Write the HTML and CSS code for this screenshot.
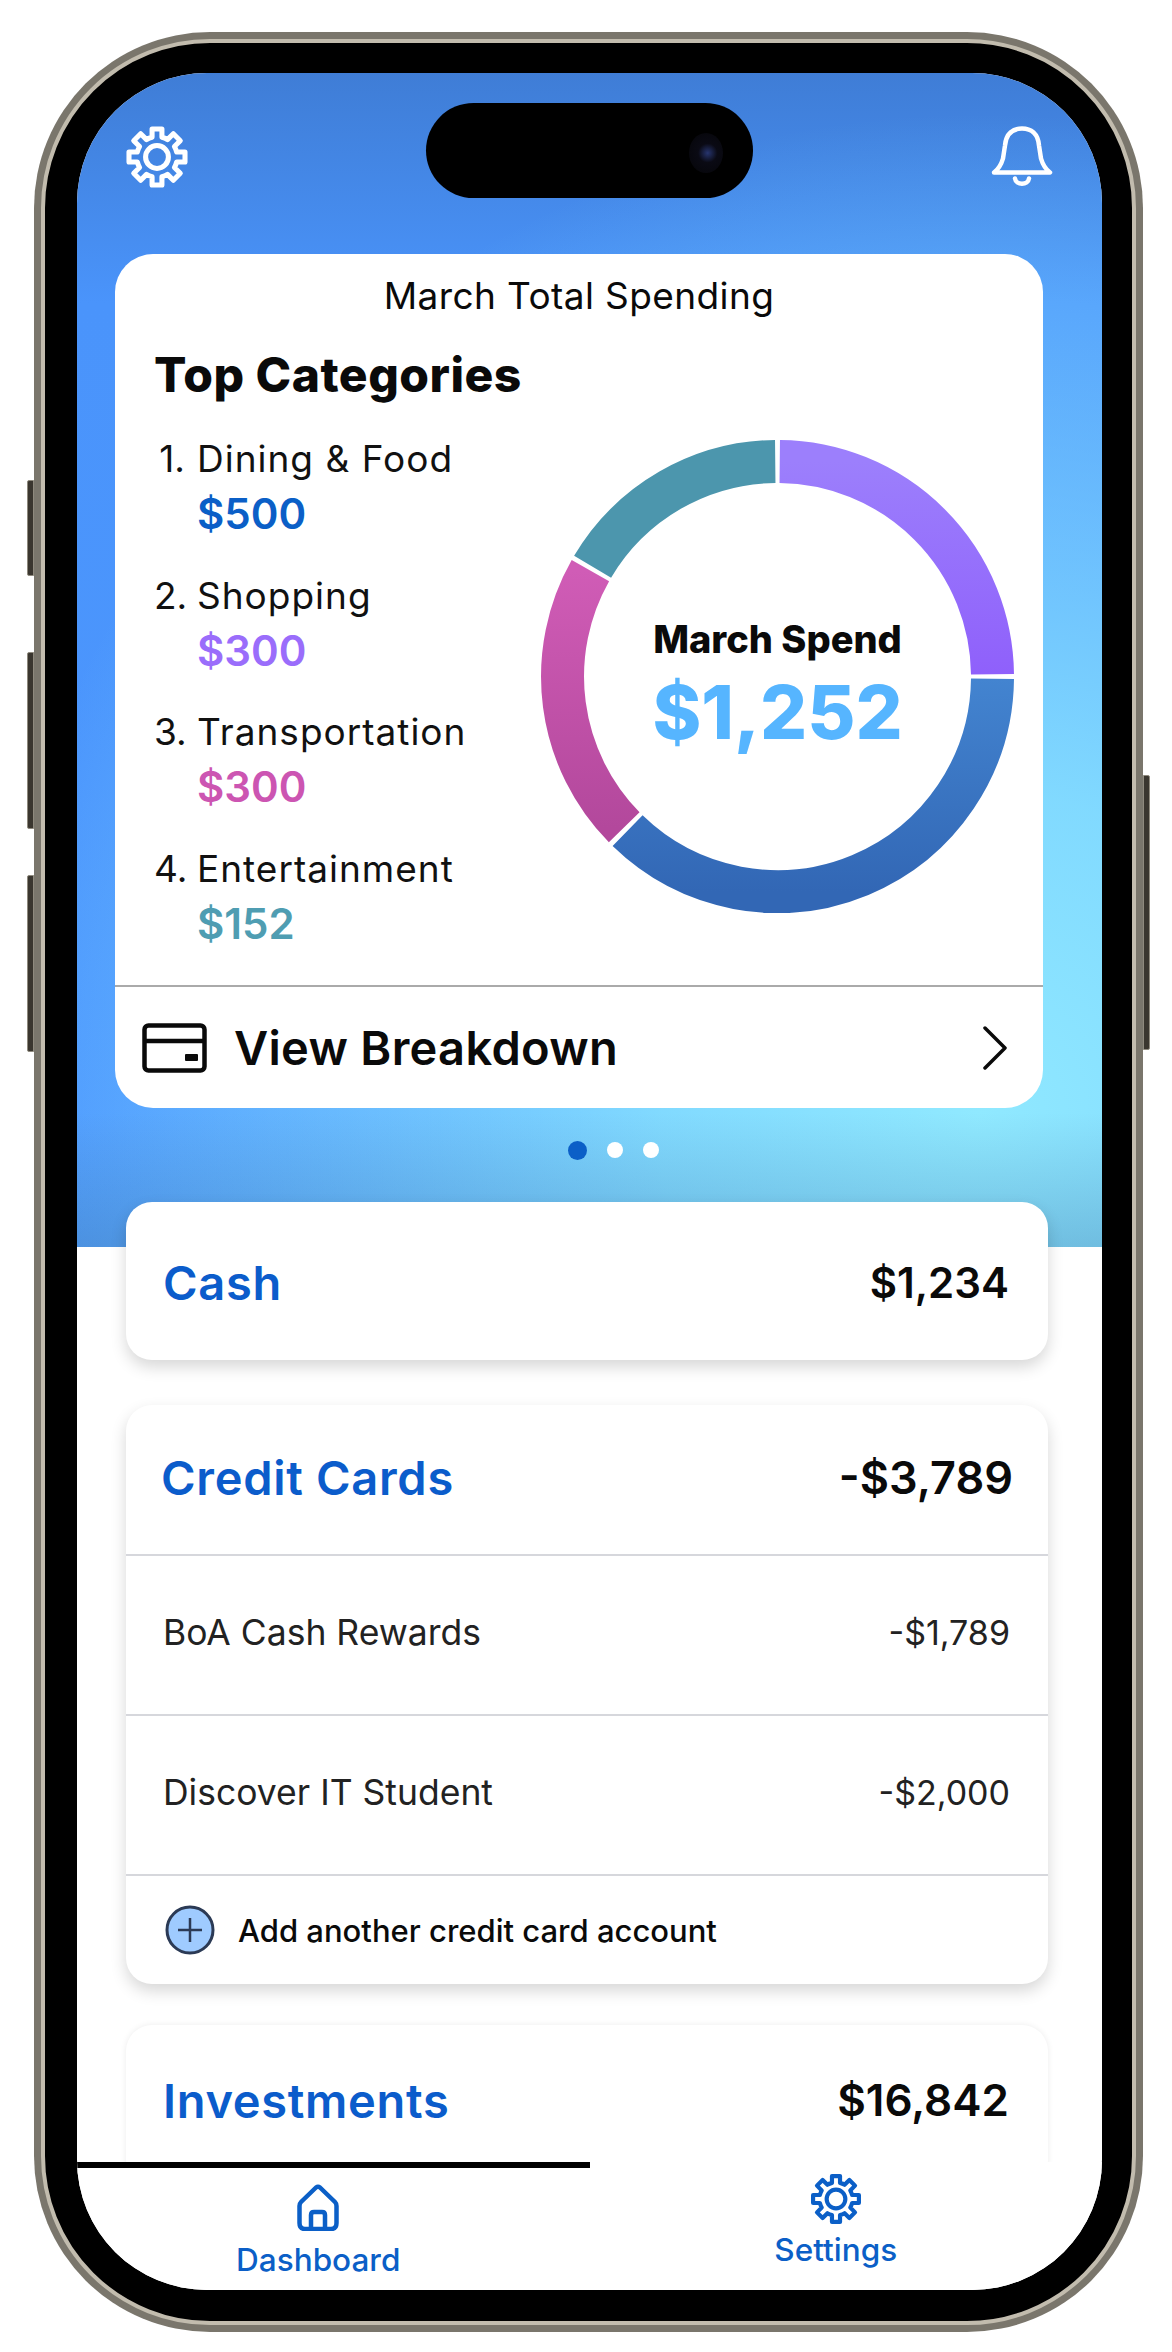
FILE: index.html
```html
<!DOCTYPE html>
<html lang="en">
  <head>
    <meta charset="UTF-8" />
    <meta name="viewport" content="width=device-width, initial-scale=1.0" />
    <title>Dashboard</title>
    <link rel="stylesheet" href="styles.css">
  </head>
  <body>
    <svg class="defs" width="0" height="0">
      <symbol id="gear" viewBox="-13 -13 26 26">
        <path d="M-1.94-7.76 L-1.94-11.03 L1.94-11.03 L1.94-7.76 A8 8 0 0 1 4.12-6.86 L6.43-9.17 L9.17-6.43 L6.86-4.12 A8 8 0 0 1 7.76-1.94 L11.03-1.94 L11.03 1.94 L7.76 1.94 A8 8 0 0 1 6.86 4.12 L9.17 6.43 L6.43 9.17 L4.12 6.86 A8 8 0 0 1 1.94 7.76 L1.94 11.03 L-1.94 11.03 L-1.94 7.76 A8 8 0 0 1 -4.12 6.86 L-6.43 9.17 L-9.17 6.43 L-6.86 4.12 A8 8 0 0 1 -7.76 1.94 L-11.03 1.94 L-11.03-1.94 L-7.76-1.94 A8 8 0 0 1 -6.86-4.12 L-9.17-6.43 L-6.43-9.17 L-4.12-6.86 A8 8 0 0 1 -1.94-7.76 Z" fill="none" stroke="currentColor" stroke-width="2" stroke-linejoin="round" />
        <circle r="4.5" fill="none" stroke="currentColor" stroke-width="2" />
      </symbol>
      <linearGradient id="gradPurple" x1="0" y1="0" x2="0" y2="1">
        <stop offset="0" stop-color="#9c7ffc" />
        <stop offset="1" stop-color="#8f60fb" />
      </linearGradient>
      <linearGradient id="gradBlue" x1="0" y1="0" x2="0" y2="1">
        <stop offset="0" stop-color="#4384d0" />
        <stop offset="1" stop-color="#3267b5" />
      </linearGradient>
      <linearGradient id="gradPink" x1="0" y1="0" x2="0" y2="1">
        <stop offset="0" stop-color="#d05cb6" />
        <stop offset="1" stop-color="#b3489c" />
      </linearGradient>
    </svg>

    <div class="phone">
      <span class="side-btn btn-mute"></span>
      <span class="side-btn btn-up"></span>
      <span class="side-btn btn-down"></span>
      <span class="side-btn btn-power"></span>
      <div class="rim">
        <div class="screen">
          <div class="island"><span class="lens"></span></div>

          <div class="scroll">
            <section class="hero">
              <div class="topbar">
                <svg class="top-gear" viewBox="-13 -13 26 26"><use href="#gear" x="-13" y="-13" width="26" height="26" /></svg>
                <svg class="top-bell" viewBox="0 0 64 62" fill="none" stroke="currentColor" stroke-width="4.5" stroke-linejoin="round" stroke-linecap="round">
                  <path d="M4 47 C8 44 11 40 13 33 L15 20 C16 8 23 3 32 3 C41 3 48 8 49 20 L51 33 C53 40 56 44 60 47 Z" />
                  <path d="M25 53 C26 60 38 60 39 53" />
                </svg>
              </div>

              <div class="spend-card">
                <div class="spend-title">March Total Spending</div>
                <h2 class="spend-heading">Top Categories</h2>
                <div class="spend-body">
                  <ol class="cats">
                    <li class="cat">
                      <div class="cat-name"><span class="cat-num">1.</span>Dining &amp; Food</div>
                      <div class="cat-amt amt-blue">$500</div>
                    </li>
                    <li class="cat">
                      <div class="cat-name"><span class="cat-num">2.</span>Shopping</div>
                      <div class="cat-amt amt-purple">$300</div>
                    </li>
                    <li class="cat">
                      <div class="cat-name"><span class="cat-num">3.</span>Transportation</div>
                      <div class="cat-amt amt-pink">$300</div>
                    </li>
                    <li class="cat">
                      <div class="cat-name"><span class="cat-num">4.</span>Entertainment</div>
                      <div class="cat-amt amt-teal">$152</div>
                    </li>
                  </ol>
                  <div class="donut">
                    <svg class="donut-ring" viewBox="0 0 473 473" fill="none" stroke-width="43">
                      <path d="M238.75 21.5 A215 215 0 0 1 451.5 234.25" stroke="url(#gradPurple)" />
                      <path d="M451.5 238.75 A215 215 0 0 1 86.6 390.7" stroke="url(#gradBlue)" />
                      <path d="M83.2 387.3 A215 215 0 0 1 49.4 130.7" stroke="url(#gradPink)" />
                      <path d="M51.6 126.8 A215 215 0 0 1 234.25 21.5" stroke="#4c96ad" />
                    </svg>
                    <div class="donut-label">
                      <div class="donut-caption">March Spend</div>
                      <div class="donut-total">$1,252</div>
                    </div>
                  </div>
                </div>
                <div class="breakdown">
                  <svg class="breakdown-icon" viewBox="0 0 65 50" fill="none" stroke="#0a0a0a">
                    <rect x="2.5" y="2.5" width="60" height="45" rx="4" stroke-width="4.5" />
                    <path d="M2.5 18 H62.5" stroke-width="4.5" />
                    <rect x="43" y="31" width="13" height="7" rx="1" fill="#0a0a0a" stroke="none" />
                  </svg>
                  <span class="breakdown-text">View Breakdown</span>
                  <svg class="chevron" viewBox="0 0 24 44" fill="none" stroke="#0a0a0a" stroke-width="3.5" stroke-linecap="round" stroke-linejoin="round">
                    <path d="M2 2 L22 22 L2 42" />
                  </svg>
                </div>
              </div>

              <div class="dots">
                <span class="dot dot-active"></span>
                <span class="dot"></span>
                <span class="dot"></span>
              </div>
            </section>

            <div class="accounts">
              <div class="acct">
                <div class="acct-head acct-cash">
                  <span class="acct-name">Cash</span>
                  <span class="acct-total">$1,234</span>
                </div>
              </div>

              <div class="acct">
                <div class="acct-head acct-credit">
                  <span class="acct-name">Credit Cards</span>
                  <span class="acct-total total-large">-$3,789</span>
                </div>
                <div class="acct-row">
                  <span class="row-name">BoA Cash Rewards</span>
                  <span>-$1,789</span>
                </div>
                <div class="acct-row">
                  <span class="row-name">Discover IT Student</span>
                  <span>-$2,000</span>
                </div>
                <div class="acct-add">
                  <svg class="add-icon" viewBox="0 0 50 50">
                    <circle cx="25" cy="25" r="23" fill="#9fcbff" stroke="#2b3a55" stroke-width="3" />
                    <path d="M25 13 V37 M13 25 H37" stroke="#2b3a55" stroke-width="2.5" />
                  </svg>
                  <span>Add another credit card account</span>
                </div>
              </div>

              <div class="acct acct-last">
                <div class="acct-head acct-invest">
                  <span class="acct-name">Investments</span>
                  <span class="acct-total total-mid">$16,842</span>
                </div>
              </div>
            </div>
          </div>

          <nav class="tabs">
            <div class="tab tab-active">
              <svg class="tab-home" viewBox="0 0 42 47" fill="none" stroke="currentColor" stroke-width="4.5" stroke-linejoin="round">
                <path d="M19 3.5 L4 18 Q2.5 19.5 2.5 22 V39 Q2.5 45 8 45 H34 Q39.5 45 39.5 39 V22 Q39.5 19.5 38 18 L23 3.5 Q21 2 19 3.5 Z" />
                <path d="M14 45 V31 Q14 28 17 28 H25 Q28 28 28 31 V45" />
              </svg>
              <span class="tab-label label-home">Dashboard</span>
            </div>
            <div class="tab tab-settings">
              <svg class="tab-gear" viewBox="-13 -13 26 26"><use href="#gear" x="-13" y="-13" width="26" height="26" /></svg>
              <span class="tab-label label-settings">Settings</span>
            </div>
          </nav>
        </div>
      </div>
    </div>
  </body>
</html>
```

FILE: styles.css
```css
* {
  box-sizing: border-box;
}
body {
  margin: 0;
  height: 2352px;
  background: #fff;
  font-family: Inter, "Liberation Sans", sans-serif;
  color: #0a0a0a;
  overflow: hidden;
}
.defs {
  display: block;
  height: 0;
}

/* device frame */
.phone {
  position: relative;
  width: 1109px;
  height: 2300px;
  margin: 32px 0 0 34px;
  padding: 7px;
  border-radius: 176px;
  background: #7a766c;
}
.rim {
  height: 100%;
  padding: 30px 30px 31px 32px;
  border-radius: 169px;
  border: 4px solid #c2bcae;
  background: #000;
}
.side-btn {
  position: absolute;
  width: 7px;
  background: #3a362f;
  border: 1px solid #8f8a7e;
  border-radius: 2px 0 0 2px;
}
.btn-mute {
  left: -7px;
  top: 448px;
  height: 96px;
}
.btn-up {
  left: -7px;
  top: 620px;
  height: 177px;
}
.btn-down {
  left: -7px;
  top: 843px;
  height: 177px;
}
.btn-power {
  right: -7px;
  top: 743px;
  height: 275px;
  border-radius: 0 2px 2px 0;
}
.screen {
  position: relative;
  height: 100%;
  display: flex;
  flex-direction: column;
  border-radius: 130px;
  background: #fff;
  overflow: hidden;
}
.island {
  position: absolute;
  left: 349px;
  top: 30px;
  width: 327px;
  height: 95px;
  border-radius: 48px;
  background: #000;
}
.lens {
  position: absolute;
  right: 30px;
  top: 30px;
  width: 34px;
  height: 40px;
  border-radius: 50%;
  background: radial-gradient(circle at 55% 50%, #27356f 0, #0a0a14 35%, #050508 100%);
}

/* blue header */
.scroll {
  flex: 1;
  min-height: 0;
  overflow: hidden;
}
.hero {
  height: 1174px;
  padding: 52px 59px 0 38px;
  background:
    linear-gradient(180deg, rgba(60, 115, 160, 0) 1040px, rgba(60, 115, 160, 0.32) 1174px),
    radial-gradient(ellipse 1000px 1000px at 88% 1040px, #90e9ff 0, rgba(135, 225, 255, 0.9) 32%, rgba(90, 165, 255, 0) 100%),
    linear-gradient(180deg, #3f7dd6 0, #4a94fb 230px, #4c97ff 100%);
}
.topbar {
  display: flex;
  justify-content: space-between;
  margin: 0 -11px 0 11px;
  height: 63px;
  color: #fff;
}
.top-gear {
  width: 66px;
  height: 66px;
  margin: -1px 0 0 -2px;
}
.top-bell {
  width: 64px;
  height: 63px;
}
.spend-card {
  height: 854px;
  margin-top: 66px;
  border-radius: 38px;
  background: #fff;
  overflow: hidden;
}
.spend-title {
  margin-top: 20px;
  font-size: 37px;
  line-height: 44px;
  letter-spacing: 0.4px;
  text-align: center;
}
.spend-heading {
  margin: 29px 0 0 39px;
  font-size: 48px;
  line-height: 56px;
  letter-spacing: 0.5px;
  font-weight: 800;
}
.spend-body {
  display: flex;
  justify-content: space-between;
  height: 545px;
  margin-top: 37px;
  padding: 0 29px 0 39px;
}
.cats {
  margin: -4px 0 0;
  padding: 0;
  list-style: none;
}
.cat {
  height: 136.5px;
}
.cat-name {
  position: relative;
  padding-left: 43px;
  font-size: 37px;
  line-height: 46px;
  letter-spacing: 1px;
  white-space: nowrap;
  color: #111;
}
.cat-num {
  position: absolute;
  left: 0;
  width: 31px;
  letter-spacing: 0;
  text-align: right;
}
.cat-amt {
  margin: 9px 0 0 43px;
  font-size: 42px;
  line-height: 46px;
  font-weight: 600;
}
.amt-blue {
  color: #0b5fc7;
}
.amt-purple {
  color: #9a6dfb;
}
.amt-pink {
  color: #cc55b2;
}
.amt-teal {
  color: #4f9db2;
}
.donut {
  display: grid;
  width: 473px;
  height: 473px;
}
.donut-ring,
.donut-label {
  grid-area: 1 / 1;
}
.donut-ring {
  width: 473px;
  height: 473px;
}
.donut-label {
  display: flex;
  flex-direction: column;
  align-items: center;
  justify-content: center;
  padding-top: 20px;
}
.donut-caption {
  font-size: 38px;
  line-height: 44px;
  font-weight: 800;
}
.donut-total {
  margin-top: 7px;
  font-size: 74px;
  line-height: 88px;
  font-weight: 800;
  color: #56b5ff;
}
.breakdown {
  display: flex;
  align-items: center;
  height: 123px;
  padding: 0 36px 0 27px;
  border-top: 2px solid #aaa;
}
.breakdown-icon {
  width: 65px;
  height: 50px;
  margin-right: 27px;
}
.breakdown-text {
  flex: 1;
  font-size: 47px;
  letter-spacing: 0.3px;
  font-weight: 600;
}
.chevron {
  width: 24px;
  height: 44px;
}
.dots {
  display: flex;
  justify-content: center;
  align-items: center;
  gap: 20px;
  height: 18px;
  margin-top: 33px;
  padding-left: 68px;
}
.dot {
  width: 16px;
  height: 16px;
  border-radius: 50%;
  background: #fff;
}
.dot-active {
  width: 19px;
  height: 19px;
  background: #0b5fc7;
}

/* account cards */
.accounts {
  position: relative;
  display: flex;
  flex-direction: column;
  gap: 45px;
  margin-top: -45px;
  padding: 0 54px 0 49px;
}
.acct {
  border-radius: 26px;
  background: #fff;
  box-shadow: 0 7px 16px rgba(0, 0, 0, 0.16);
}
.acct-last {
  margin-top: -4px;
  height: 160px;
  box-shadow: 0 0 6px rgba(0, 0, 0, 0.08);
}
.acct-head {
  display: flex;
  justify-content: space-between;
  align-items: center;
  padding: 0 39px 0 37px;
}
.acct-cash {
  height: 158px;
  padding-top: 2px;
}
.acct-credit {
  height: 149px;
  padding: 0 35px 4px;
}
.acct-invest {
  height: 150px;
  margin-top: 0;
}
.acct-name {
  font-size: 47px;
  letter-spacing: 0.7px;
  font-weight: 600;
  color: #0b5ccb;
}
.acct-total {
  font-size: 42px;
  font-weight: 600;
}
.total-large {
  font-size: 45px;
}
.total-mid {
  font-size: 44px;
}
.acct-row {
  display: flex;
  justify-content: space-between;
  align-items: center;
  height: 160px;
  padding: 0 38px 6px 37px;
  border-top: 2px solid #d6d7dc;
  font-size: 34px;
  color: #222;
}
.row-name {
  font-size: 35.5px;
}
.acct-add {
  display: flex;
  align-items: center;
  gap: 23px;
  height: 110px;
  padding-left: 39px;
  border-top: 2px solid #d6d7dc;
  font-size: 31px;
  font-weight: 500;
}
.add-icon {
  width: 50px;
  height: 50px;
}

/* bottom tabs */
.tabs {
  display: flex;
  height: 128px;
  background: #fff;
  position: relative;
  color: #0b5fc7;
}
.tab {
  width: 50%;
  display: flex;
  flex-direction: column;
  align-items: center;
}
.tab-active {
  padding: 16px 30px 0 0;
  border-top: 6px solid #000;
}
.tab-settings {
  padding: 10px 20px 0 0;
}
.tab-home {
  width: 42px;
  height: 47px;
}
.tab-gear {
  width: 54px;
  height: 54px;
}
.tab-label {
  font-size: 31.5px;
  line-height: 40px;
  font-weight: 500;
}
.label-home {
  margin-top: 9px;
}
.label-settings {
  margin-top: 4px;
}
```
